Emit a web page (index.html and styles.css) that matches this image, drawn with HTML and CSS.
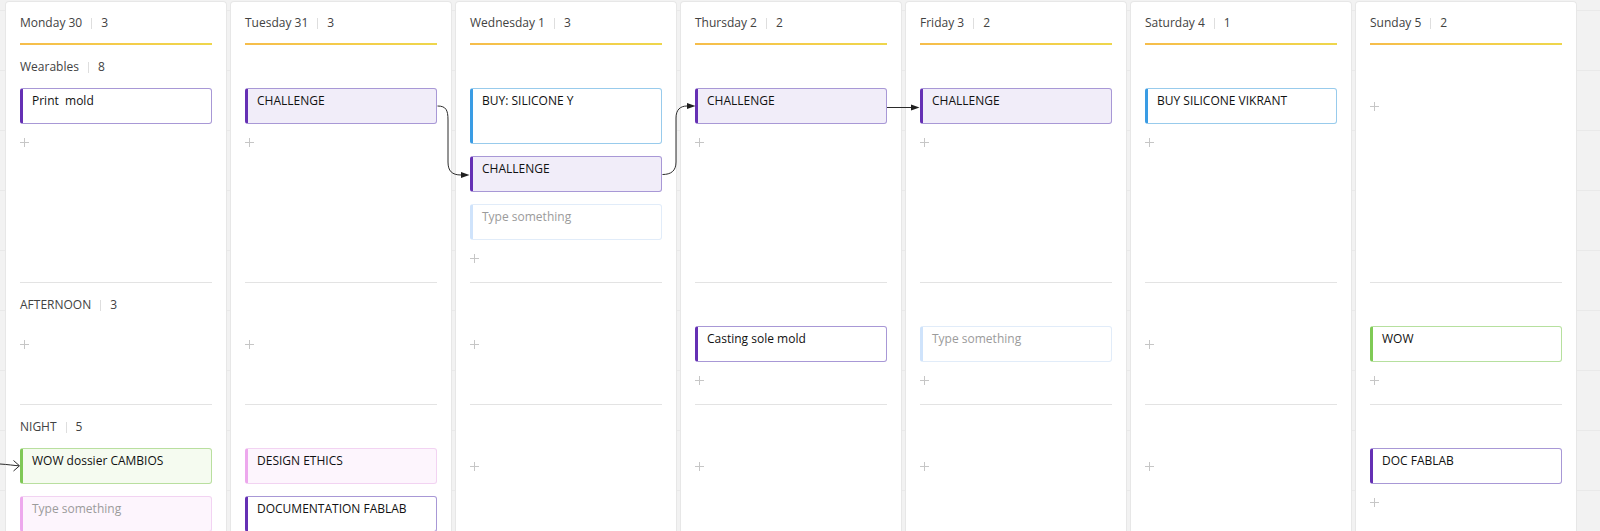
FILE: index.html
```html
<!DOCTYPE html>
<html lang="en">
<head>
<meta charset="utf-8">
<title>Week board</title>
<link rel="stylesheet" href="styles.css">
</head>
<body>
<div class="board">
  <div class="week">
    <!-- Monday -->
    <div class="cell head"><div class="title"><span>Monday 30</span><span class="sep"></span><span>3</span></div><div class="accent"></div></div>
    <div class="cell lane">
      <div class="lane-label"><span>Wearables</span><span class="sep"></span><span>8</span></div>
      <div class="cards"><div class="card c-purple">Print &nbsp;mold</div></div>
      <div class="add"><svg width="9" height="9" viewBox="0 0 9 9"><path d="M4.5 0v9M0 4.5h9"/></svg></div>
      <div class="rule"></div>
    </div>
    <div class="cell lane">
      <div class="lane-label"><span>AFTERNOON</span><span class="sep"></span><span>3</span></div>
      <div class="cards"></div>
      <div class="add"><svg width="9" height="9" viewBox="0 0 9 9"><path d="M4.5 0v9M0 4.5h9"/></svg></div>
      <div class="rule"></div>
    </div>
    <div class="cell lane">
      <div class="lane-label"><span>NIGHT</span><span class="sep"></span><span>5</span></div>
      <div class="cards">
        <div class="card c-green-fill">WOW dossier CAMBIOS</div>
        <div class="card c-pink-fill placeholder">Type something</div>
      </div>
      <div class="add"><svg width="9" height="9" viewBox="0 0 9 9"><path d="M4.5 0v9M0 4.5h9"/></svg></div>
      <div class="rule"></div>
    </div>

    <!-- Tuesday -->
    <div class="cell head"><div class="title"><span>Tuesday 31</span><span class="sep"></span><span>3</span></div><div class="accent"></div></div>
    <div class="cell lane">
      <div class="lane-label"></div>
      <div class="cards"><div class="card c-purple-fill">CHALLENGE</div></div>
      <div class="add"><svg width="9" height="9" viewBox="0 0 9 9"><path d="M4.5 0v9M0 4.5h9"/></svg></div>
      <div class="rule"></div>
    </div>
    <div class="cell lane">
      <div class="lane-label"></div>
      <div class="cards"></div>
      <div class="add"><svg width="9" height="9" viewBox="0 0 9 9"><path d="M4.5 0v9M0 4.5h9"/></svg></div>
      <div class="rule"></div>
    </div>
    <div class="cell lane">
      <div class="lane-label"></div>
      <div class="cards">
        <div class="card c-pink-fill">DESIGN ETHICS</div>
        <div class="card c-purple">DOCUMENTATION FABLAB</div>
      </div>
      <div class="add"><svg width="9" height="9" viewBox="0 0 9 9"><path d="M4.5 0v9M0 4.5h9"/></svg></div>
      <div class="rule"></div>
    </div>

    <!-- Wednesday -->
    <div class="cell head"><div class="title"><span>Wednesday 1</span><span class="sep"></span><span>3</span></div><div class="accent"></div></div>
    <div class="cell lane">
      <div class="lane-label"></div>
      <div class="cards">
        <div class="card c-blue tall">BUY: SILICONE Y</div>
        <div class="card c-purple-fill">CHALLENGE</div>
        <div class="card c-ghost placeholder">Type something</div>
      </div>
      <div class="add"><svg width="9" height="9" viewBox="0 0 9 9"><path d="M4.5 0v9M0 4.5h9"/></svg></div>
      <div class="rule"></div>
    </div>
    <div class="cell lane">
      <div class="lane-label"></div>
      <div class="cards"></div>
      <div class="add"><svg width="9" height="9" viewBox="0 0 9 9"><path d="M4.5 0v9M0 4.5h9"/></svg></div>
      <div class="rule"></div>
    </div>
    <div class="cell lane">
      <div class="lane-label"></div>
      <div class="cards"></div>
      <div class="add"><svg width="9" height="9" viewBox="0 0 9 9"><path d="M4.5 0v9M0 4.5h9"/></svg></div>
      <div class="rule"></div>
    </div>

    <!-- Thursday -->
    <div class="cell head"><div class="title"><span>Thursday 2</span><span class="sep"></span><span>2</span></div><div class="accent"></div></div>
    <div class="cell lane">
      <div class="lane-label"></div>
      <div class="cards"><div class="card c-purple-fill">CHALLENGE</div></div>
      <div class="add"><svg width="9" height="9" viewBox="0 0 9 9"><path d="M4.5 0v9M0 4.5h9"/></svg></div>
      <div class="rule"></div>
    </div>
    <div class="cell lane">
      <div class="lane-label"></div>
      <div class="cards"><div class="card c-purple">Casting sole mold</div></div>
      <div class="add"><svg width="9" height="9" viewBox="0 0 9 9"><path d="M4.5 0v9M0 4.5h9"/></svg></div>
      <div class="rule"></div>
    </div>
    <div class="cell lane">
      <div class="lane-label"></div>
      <div class="cards"></div>
      <div class="add"><svg width="9" height="9" viewBox="0 0 9 9"><path d="M4.5 0v9M0 4.5h9"/></svg></div>
      <div class="rule"></div>
    </div>

    <!-- Friday -->
    <div class="cell head"><div class="title"><span>Friday 3</span><span class="sep"></span><span>2</span></div><div class="accent"></div></div>
    <div class="cell lane">
      <div class="lane-label"></div>
      <div class="cards"><div class="card c-purple-fill">CHALLENGE</div></div>
      <div class="add"><svg width="9" height="9" viewBox="0 0 9 9"><path d="M4.5 0v9M0 4.5h9"/></svg></div>
      <div class="rule"></div>
    </div>
    <div class="cell lane">
      <div class="lane-label"></div>
      <div class="cards"><div class="card c-ghost placeholder">Type something</div></div>
      <div class="add"><svg width="9" height="9" viewBox="0 0 9 9"><path d="M4.5 0v9M0 4.5h9"/></svg></div>
      <div class="rule"></div>
    </div>
    <div class="cell lane">
      <div class="lane-label"></div>
      <div class="cards"></div>
      <div class="add"><svg width="9" height="9" viewBox="0 0 9 9"><path d="M4.5 0v9M0 4.5h9"/></svg></div>
      <div class="rule"></div>
    </div>

    <!-- Saturday -->
    <div class="cell head"><div class="title"><span>Saturday 4</span><span class="sep"></span><span>1</span></div><div class="accent"></div></div>
    <div class="cell lane">
      <div class="lane-label"></div>
      <div class="cards"><div class="card c-blue">BUY SILICONE VIKRANT</div></div>
      <div class="add"><svg width="9" height="9" viewBox="0 0 9 9"><path d="M4.5 0v9M0 4.5h9"/></svg></div>
      <div class="rule"></div>
    </div>
    <div class="cell lane">
      <div class="lane-label"></div>
      <div class="cards"></div>
      <div class="add"><svg width="9" height="9" viewBox="0 0 9 9"><path d="M4.5 0v9M0 4.5h9"/></svg></div>
      <div class="rule"></div>
    </div>
    <div class="cell lane">
      <div class="lane-label"></div>
      <div class="cards"></div>
      <div class="add"><svg width="9" height="9" viewBox="0 0 9 9"><path d="M4.5 0v9M0 4.5h9"/></svg></div>
      <div class="rule"></div>
    </div>

    <!-- Sunday -->
    <div class="cell head"><div class="title"><span>Sunday 5</span><span class="sep"></span><span>2</span></div><div class="accent"></div></div>
    <div class="cell lane">
      <div class="lane-label"></div>
      <div class="cards"></div>
      <div class="add"><svg width="9" height="9" viewBox="0 0 9 9"><path d="M4.5 0v9M0 4.5h9"/></svg></div>
      <div class="rule"></div>
    </div>
    <div class="cell lane">
      <div class="lane-label"></div>
      <div class="cards"><div class="card c-green">WOW</div></div>
      <div class="add"><svg width="9" height="9" viewBox="0 0 9 9"><path d="M4.5 0v9M0 4.5h9"/></svg></div>
      <div class="rule"></div>
    </div>
    <div class="cell lane">
      <div class="lane-label"></div>
      <div class="cards"><div class="card c-purple">DOC FABLAB</div></div>
      <div class="add"><svg width="9" height="9" viewBox="0 0 9 9"><path d="M4.5 0v9M0 4.5h9"/></svg></div>
      <div class="rule"></div>
    </div>
  </div>

  <svg class="links" width="1600" height="531" viewBox="0 0 1600 531">
    <g fill="none" stroke="#2b2b2b" stroke-width="1">
      <path d="M437.5 106 C446 106 448 110 448 120 L448 162 C448 171 452 175 461 175"/>
      <path d="M662.5 174.5 C671 174.5 676 171 676 162 L676 118 C676 110 680 106 687 106"/>
      <path d="M887 107.5 L911 107.5"/>
      <path d="M0 464 C8 464.5 14 465.5 19 465.8"/>
      <path d="M13.5 460.5 L19.5 465.8 L13.5 471"/>
    </g>
    <g fill="#1f1f1f">
      <polygon points="461,172 469.5,175 461,178"/>
      <polygon points="687,103 695.5,106 687,109"/>
      <polygon points="911,104.5 919.5,107.5 911,110.5"/>
    </g>
  </svg>
</div>
</body>
</html>
```

FILE: styles.css
```css
html, body {
  margin: 0;
  padding: 0;
  height: 531px;
  overflow: hidden;
}

body {
  font-family: "Open Sans", "Noto Sans", Arial, sans-serif;
  font-size: 12px;
  color: #161616;
  background-color: #f2f2f2;
  background-image: repeating-linear-gradient(180deg,
    transparent 0, transparent 10px,
    #e9e9e9 10px, #e9e9e9 11px,
    transparent 11px, transparent 60px);
}

.board {
  position: relative;
  width: 1600px;
  height: 531px;
  padding: 1px 0 0 5px;
  box-sizing: border-box;
}

.week {
  display: grid;
  grid-auto-flow: column;
  grid-template-rows: auto auto auto auto;
  grid-auto-columns: 222px;
  column-gap: 3px;
}

.cell {
  background: #fff;
  border-left: 1px solid #e7e7e7;
  border-right: 1px solid #e7e7e7;
  padding: 0 14px;
  box-sizing: border-box;
}

.head {
  border-top: 1px solid #e7e7e7;
  border-radius: 4px 4px 0 0;
  padding-top: 11px;
}

.title,
.lane-label {
  display: flex;
  align-items: center;
  height: 20px;
  line-height: 20px;
  color: #424242;
  white-space: nowrap;
}

.sep {
  display: inline-block;
  width: 1px;
  height: 11px;
  background: #dedede;
  margin: 0 9px;
}

.accent {
  height: 2px;
  margin-top: 10px;
  background: linear-gradient(90deg, #f6bd4b, #f4ce4a 60%, #eed64c);
}

.lane {
  display: flex;
  flex-direction: column;
  padding-top: 11px;
}

.lane-label {
  height: 22px;
  line-height: 22px;
  margin-bottom: 10px;
}

.cards {
  display: flex;
  flex-direction: column;
  gap: 12px;
}

.card {
  box-sizing: border-box;
  height: 36px;
  padding: 2px 8px 0 9px;
  line-height: 19px;
  border: 1px solid #a898d6;
  border-left: 3px solid #6530b4;
  border-radius: 3px;
  background: #fff;
  color: #111;
  white-space: nowrap;
  overflow: hidden;
}

.card.tall {
  height: 56px;
}

.card.placeholder {
  color: #9b9b9b;
}

.c-purple {
  border-color: #a898d6;
  border-left-color: #6530b4;
}

.c-purple-fill {
  background: #f1edf9;
  border-color: #a898d6;
  border-left-color: #6530b4;
}

.c-blue {
  border-color: #98cbec;
  border-left-color: #3a9ce4;
}

.c-ghost {
  border-color: #e1ecf9;
  border-left-color: #cfe3fb;
}

.c-green {
  border-color: #b6e09e;
  border-left-color: #7fca56;
}

.c-green-fill {
  background: #f5fbf0;
  border-color: #b9df9f;
  border-left-color: #7fc856;
}

.c-pink-fill {
  background: #fdf5fd;
  border-color: #f2d3f2;
  border-left-color: #eda8ed;
}

.add {
  height: 36px;
  margin-bottom: 6px;
  display: flex;
  align-items: center;
}

.add svg {
  stroke: #c6c6c6;
  stroke-width: 1;
  fill: none;
}

.rule {
  margin-top: auto;
  height: 1px;
  background: #e3e3e3;
}

.links {
  position: absolute;
  top: 0;
  left: 0;
  pointer-events: none;
}
```
